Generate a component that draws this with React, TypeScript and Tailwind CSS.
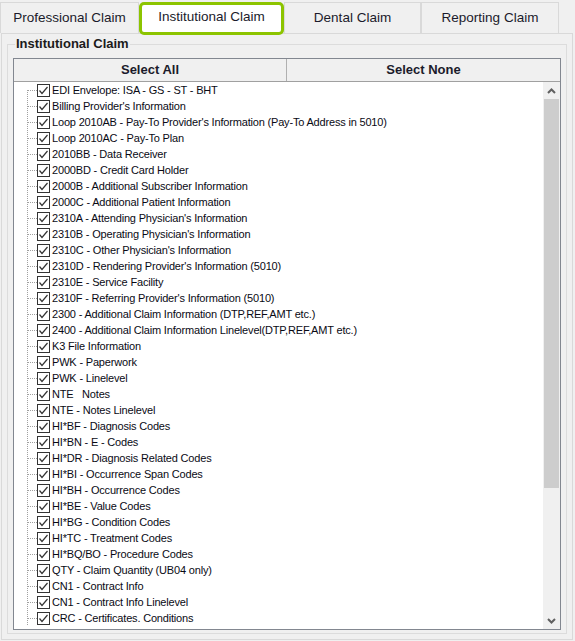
import React from 'react';

const items = [
  'EDI Envelope: ISA - GS - ST - BHT',
  "Billing Provider's Information",
  "Loop 2010AB - Pay-To Provider's Information (Pay-To Address in 5010)",
  'Loop 2010AC - Pay-To Plan',
  '2010BB - Data Receiver',
  '2000BD - Credit Card Holder',
  '2000B - Additional Subscriber Information',
  '2000C - Additional Patient Information',
  "2310A - Attending Physician's Information",
  "2310B - Operating Physician's Information",
  "2310C - Other Physician's Information",
  "2310D - Rendering Provider's Information (5010)",
  '2310E - Service Facility',
  "2310F - Referring Provider's Information (5010)",
  '2300 - Additional Claim Information (DTP,REF,AMT etc.)',
  '2400 - Additional Claim Information Linelevel(DTP,REF,AMT etc.)',
  'K3 File Information',
  'PWK - Paperwork',
  'PWK - Linelevel',
  'NTE   Notes',
  'NTE - Notes Linelevel',
  'HI*BF - Diagnosis Codes',
  'HI*BN - E - Codes',
  'HI*DR - Diagnosis Related Codes',
  'HI*BI - Occurrence Span Codes',
  'HI*BH - Occurrence Codes',
  'HI*BE - Value Codes',
  'HI*BG - Condition Codes',
  'HI*TC - Treatment Codes',
  'HI*BQ/BO - Procedure Codes',
  'QTY - Claim Quantity (UB04 only)',
  'CN1 - Contract Info',
  'CN1 - Contract Info Linelevel',
  'CRC - Certificates. Conditions',
];

const tabs = [
  { label: 'Professional Claim', width: 'w-[139px]' },
  { label: 'Institutional Claim', width: 'w-[145px]', active: true },
  { label: 'Dental Claim', width: 'w-[137px]' },
  { label: 'Reporting Claim', width: 'w-[138px]' },
];

const CheckBox = () => (
  <span className="w-[13px] h-[13px] border border-[#333333] bg-white flex items-center justify-center shrink-0">
    <svg width="11" height="11" viewBox="0 0 11 11">
      <polyline points="1.5,5.5 4,8.5 9.5,2" fill="none" stroke="#333333" strokeWidth="1.2" />
    </svg>
  </span>
);

const TreeRow = ({ label, first }: { label: string; first: boolean }) => (
  <div className="h-[16px] flex items-center">
    <svg width="23" height="16" className="shrink-0">
      <line x1="13.5" y1={first ? 8 : 0} x2="13.5" y2="16" stroke="#a0a0a0" strokeDasharray="1 1" />
      <line x1="14" y1="8.5" x2="23" y2="8.5" stroke="#a0a0a0" strokeDasharray="1 1" />
    </svg>
    <CheckBox />
    <span className="ml-[2px] whitespace-pre text-[11px] tracking-[-0.18px] leading-[16px] text-[#0a0a14]">
      {label}
    </span>
  </div>
);

const Chevron = ({ up }: { up?: boolean }) => (
  <svg width="9" height="6" viewBox="0 0 9 6">
    <polyline
      points={up ? '1,5 4.5,1.5 8,5' : '1,1 4.5,4.5 8,1'}
      fill="none"
      stroke="#606060"
      strokeWidth="2"
    />
  </svg>
);

export default function App() {
  return (
    <div className="w-[575px] h-[641px] bg-[#f0f0f0] overflow-hidden font-['Liberation_Sans',Arial,sans-serif] text-[#1b1b2b]">
      {/* tab strip */}
      <div className="flex h-[33px] pt-[2px]">
        {tabs.map((tab) =>
          tab.active ? (
            <div
              key={tab.label}
              className={`${tab.width} h-[33px] relative z-10 bg-white border-[3px] border-[#8cc400] rounded-[5px] flex items-center justify-center text-[13.5px] pb-[3px]`}
            >
              {tab.label}
            </div>
          ) : (
            <div
              key={tab.label}
              className={`${tab.width} h-[31px] border border-b-0 border-[#d9d9d9] bg-[#f0f0f0] flex items-center justify-center text-[13.5px]`}
            >
              {tab.label}
            </div>
          )
        )}
      </div>

      {/* tab page */}
      <div className="ml-[1px] w-[572px] h-[607px] border border-[#d9d9d9] px-[5px] pt-[10px]">
        <div className="relative h-[590px] border border-[#dcdcdc] px-[5px] pt-[13px]">
          <span className="absolute left-[7px] -top-[9px] px-[1px] bg-[#f0f0f0] text-[13px] leading-[16px] font-bold text-[#1b1b1b]">
            Institutional Claim
          </span>

          <div className="h-[572px] border border-[#828790] bg-white flex flex-col">
            <div className="h-[23px] flex border-b border-[#a0a0a0] bg-[#f0f0f0] text-[13px] font-bold text-[#1b1b2b] shrink-0">
              <div className="w-[273px] border-r border-[#b0b0b0] flex items-center justify-center">Select All</div>
              <div className="flex-1 flex items-center justify-center">Select None</div>
            </div>

            <div className="flex flex-1 min-h-0">
              <div className="flex-1 overflow-hidden">
                {items.map((label, i) => (
                  <TreeRow key={label} label={label} first={i === 0} />
                ))}
              </div>

              <div className="w-[17px] bg-[#f0f0f0] flex flex-col shrink-0">
                <div className="h-[17px] flex items-center justify-center">
                  <Chevron up />
                </div>
                <div className="flex-1 px-[1px]">
                  <div className="h-[389px] bg-[#cdcdcd]" />
                </div>
                <div className="h-[17px] flex items-center justify-center">
                  <Chevron />
                </div>
              </div>
            </div>
          </div>
        </div>
      </div>
    </div>
  );
}
